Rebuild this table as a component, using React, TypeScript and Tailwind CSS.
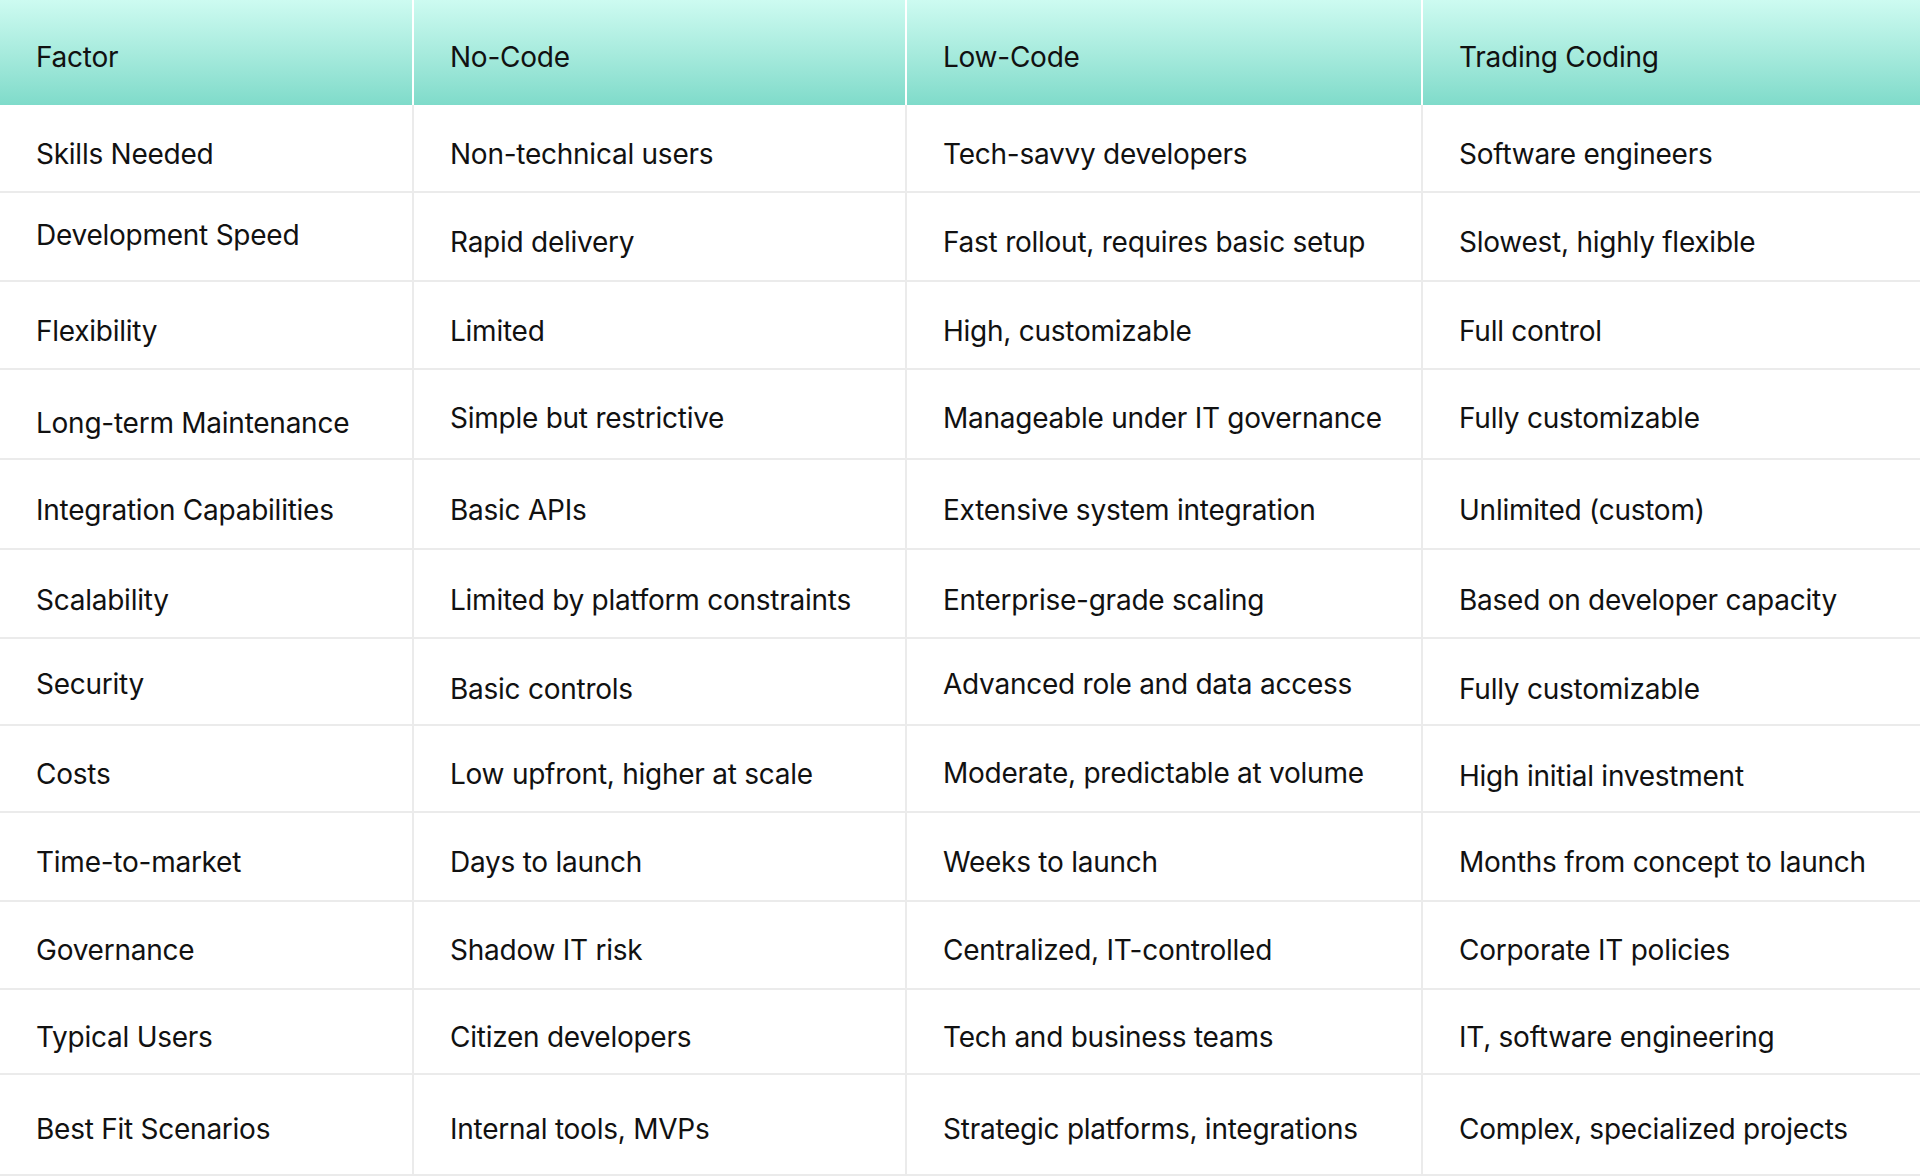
const headers = ['Factor', 'No-Code', 'Low-Code', 'Trading Coding'];

// each cell: [text, vertical nudge]. The nudge pushes the label down a little,
// as in the original image where labels sit slightly below the row middle.
type Cell = [string, number];

const rows: { h: string; cells: Cell[] }[] = [
  { h: 'h-[88px]', cells: [['Skills Needed', 6], ['Non-technical users', 6], ['Tech-savvy developers', 6], ['Software engineers', 6]] },
  { h: 'h-[89px]', cells: [['Development Speed', -2], ['Rapid delivery', 5], ['Fast rollout, requires basic setup', 5], ['Slowest, highly flexible', 5]] },
  { h: 'h-[88px]', cells: [['Flexibility', 6], ['Limited', 6], ['High, customizable', 6], ['Full control', 6]] },
  { h: 'h-[90px]', cells: [['Long-term Maintenance', 9], ['Simple but restrictive', 4], ['Manageable under IT governance', 4], ['Fully customizable', 4]] },
  { h: 'h-[90px]', cells: [['Integration Capabilities', 6], ['Basic APIs', 6], ['Extensive system integration', 6], ['Unlimited (custom)', 6]] },
  { h: 'h-[89px]', cells: [['Scalability', 6], ['Limited by platform constraints', 6], ['Enterprise-grade scaling', 6], ['Based on developer capacity', 6]] },
  { h: 'h-[87px]', cells: [['Security', 2], ['Basic controls', 7], ['Advanced role and data access', 2], ['Fully customizable', 7]] },
  { h: 'h-[87px]', cells: [['Costs', 5], ['Low upfront, higher at scale', 5], ['Moderate, predictable at volume', 4], ['High initial investment', 7]] },
  { h: 'h-[89px]', cells: [['Time-to-market', 5], ['Days to launch', 5], ['Weeks to launch', 5], ['Months from concept to launch', 5]] },
  { h: 'h-[88px]', cells: [['Governance', 5], ['Shadow IT risk', 5], ['Centralized, IT-controlled', 5], ['Corporate IT policies', 5]] },
  { h: 'h-[85px]', cells: [['Typical Users', 5], ['Citizen developers', 5], ['Tech and business teams', 5], ['IT, software engineering', 5]] },
  { h: 'h-[101px]', cells: [['Best Fit Scenarios', 4], ['Internal tools, MVPs', 4], ['Strategic platforms, integrations', 4], ['Complex, specialized projects', 4]] },
];

const nudge: Record<number, string> = {
  [-2]: 'pb-[4px]',
  2: 'pt-[4px]',
  4: 'pt-[8px]',
  5: 'pt-[10px]',
  6: 'pt-[12px]',
  7: 'pt-[14px]',
  9: 'pt-[18px]',
};

export default function App() {
  return (
    <div
      className="w-[1920px] h-[1176px] overflow-hidden bg-white text-[#111111]"
      style={{ fontFamily: 'Inter, "Noto Sans", sans-serif' }}
    >
      <div className="grid grid-cols-[414px_493px_516px_497px]">
        {headers.map((h, i) => (
          <div
            key={h}
            className={`h-[105px] flex items-center pl-[36px] pt-[9px] text-[28px] tracking-[-0.25px] bg-gradient-to-b from-[#cdfbf1] to-[#7fdbca] ${
              i < 3 ? 'border-r-2 border-white' : ''
            }`}
          >
            {h}
          </div>
        ))}
        {rows.map((row, r) =>
          row.cells.map(([text, n], c) => (
            <div
              key={`${r}-${c}`}
              className={`flex items-center pl-[36px] text-[28px] tracking-[-0.25px] border-b-2 border-[#ebebeb] ${row.h} ${nudge[n]} ${
                c < 3 ? 'border-r-2' : ''
              }`}
            >
              {text}
            </div>
          ))
        )}
      </div>
    </div>
  );
}
